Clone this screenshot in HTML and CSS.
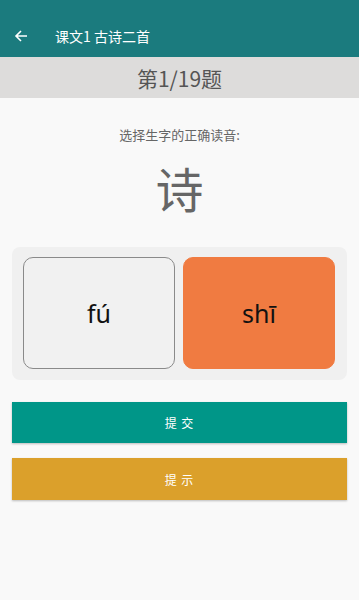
FILE: index.html
```html
<!DOCTYPE html>
<html lang="zh">
<head>
<meta charset="utf-8">
<link rel="stylesheet" href="styles.css">
</head>
<body>
<div class="app">
  <header class="toolbar">
    <svg class="back" width="14" height="14" viewBox="0 0 14 14"><path d="M13 7H2M7 2L2 7l5 5" fill="none" stroke="#fff" stroke-width="1.6"/></svg>
    <span class="title">课文1 古诗二首</span>
  </header>
  <div class="progress">第1/19题</div>
  <main class="content">
    <p class="prompt">选择生字的正确读音:</p>
    <div class="char">诗</div>
    <div class="options">
      <div class="option">fú</div>
      <div class="option selected">shī</div>
    </div>
    <button class="btn submit">提 交</button>
    <button class="btn hint">提 示</button>
  </main>
</div>
</body>
</html>
```
FILE: styles.css
```css
* { box-sizing: border-box; }
html, body { margin: 0; padding: 0; }
body {
  background: #f9f9f9;
  font-family: "Noto Sans CJK SC", "Noto Sans", Roboto, sans-serif;
  width: 359px;
  height: 600px;
  overflow: hidden;
}
.toolbar {
  height: 57px;
  background: #1b7b7e;
  display: flex;
  align-items: flex-end;
  padding: 0 0 12px 14px;
}
.back { margin-bottom: 2px; }
.title {
  color: #fff;
  font-size: 14px;
  line-height: 18px;
  margin-left: 27px;
}
.progress {
  height: 41px;
  background: #dddcdb;
  color: #555;
  font-size: 21px;
  display: flex;
  align-items: center;
  justify-content: center;
}
.content {
  padding: 0 12px;
  display: flex;
  flex-direction: column;
}
.prompt {
  margin: 29px 0 0;
  text-align: center;
  font-size: 13px;
  line-height: 16px;
  color: #666;
}
.char {
  text-align: center;
  font-size: 48px;
  line-height: 60px;
  color: #666;
  margin-top: 14px;
}
.options {
  margin-top: 30px;
  height: 133px;
  background: #f0f0f0;
  border-radius: 8px;
  padding: 10px 12px 11px 11px;
  display: flex;
  gap: 8px;
}
.option {
  flex: 1;
  border: 1px solid #8a8a8a;
  border-radius: 10px;
  background: #f1f1f1;
  display: flex;
  align-items: center;
  justify-content: center;
  font-family: "Noto Sans", sans-serif;
  font-size: 25px;
  color: #111;
}
.option.selected {
  background: #f07b41;
  border-color: #f07b41;
}
.btn {
  border: none;
  height: 41px;
  color: #fff;
  font-family: "Noto Sans CJK SC", sans-serif;
  font-size: 12px;
  letter-spacing: 1px;
  box-shadow: 0 1px 2px rgba(0,0,0,0.25);
  padding: 0;
}
.submit { background: #009688; margin-top: 22px; }
.hint { background: #dba02b; margin-top: 15px; height: 42px; }
```
